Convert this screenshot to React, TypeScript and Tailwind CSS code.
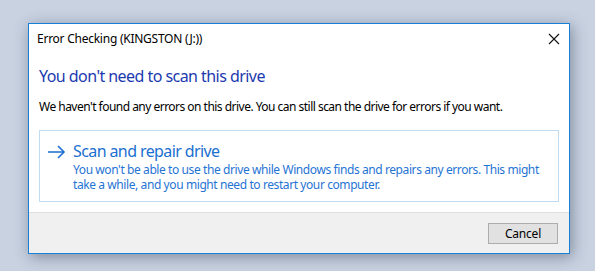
import React from "react";

export default function App() {
  const font = { fontFamily: '"Noto Sans", "Open Sans", sans-serif' };
  return (
    <div className="w-[595px] h-[271px] bg-[#c9d2e1] pt-[23px] pl-[28px] overflow-hidden" style={font}>
      <div className="w-[542px] h-[231px] border border-[#1a7fd6] bg-white flex flex-col shadow-[2px_3px_14px_rgba(40,50,70,0.45)]">
        <div className="h-[30px] flex items-center justify-between pl-[8px] pr-[8px]">
          <span className="text-[12px] text-black tracking-[-0.25px]">Error Checking (KINGSTON (J:))</span>
          <svg width="12" height="12" viewBox="0 0 12 12" className="mr-[1px]">
            <path d="M1 1 L11 11 M11 1 L1 11" stroke="#111" strokeWidth="1.1" />
          </svg>
        </div>
        <div className="px-[10px] flex flex-col flex-1">
          <div className="mt-[11px] text-[16px] leading-[22px] text-[#1c3ab0] tracking-[-0.55px] whitespace-nowrap">
            You don't need to scan this drive
          </div>
          <div className="mt-[12px] text-[12px] leading-[16px] text-black tracking-[-0.52px] whitespace-nowrap">
            We haven't found any errors on this drive. You can still scan the drive for errors if you want.
          </div>
          <div className="mt-[15px] h-[72px] border border-[#bfdcf3] flex pl-[7px] pt-[9px]">
            <svg width="19" height="14" viewBox="0 0 19 14" className="mt-[5px]">
              <path d="M1 7 H17 M11 1 L17 7 L11 13" stroke="#1a6fd0" strokeWidth="1.6" fill="none" />
            </svg>
            <div className="ml-[7px] flex flex-col">
              <div className="text-[16px] leading-[22px] text-[#1a6fd0] tracking-[-0.6px] whitespace-nowrap">Scan and repair drive</div>
              <div className="text-[12px] leading-[15px] h-[15px] text-[#1f74d4] tracking-[-0.41px] whitespace-nowrap">
                You won't be able to use the drive while Windows finds and repairs any errors. This might
              </div>
              <div className="text-[12px] leading-[15px] h-[15px] text-[#1f74d4] tracking-[-0.41px] whitespace-nowrap">
                take a while, and you might need to restart your computer.
              </div>
            </div>
          </div>
        </div>
        <div className="h-[41px] border-t border-[#dfdfdf] bg-[#f0f0f0] flex justify-end pr-[11px] pt-[10px]">
          <div className="w-[70px] h-[21px] border border-[#adadad] bg-[#e1e1e1] flex items-center justify-center text-[12px] text-black tracking-[-0.2px]">
            Cancel
          </div>
        </div>
      </div>
    </div>
  );
}
